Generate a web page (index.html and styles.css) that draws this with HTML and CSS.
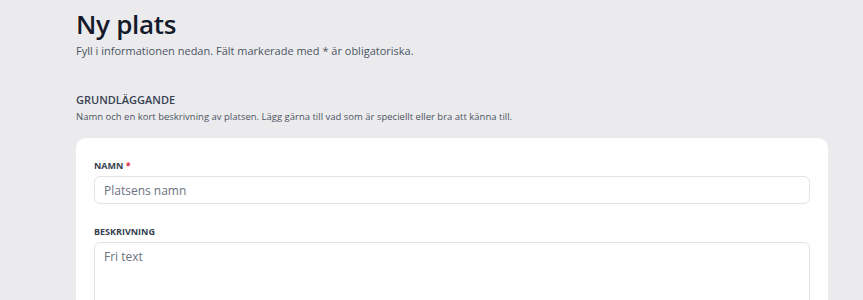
FILE: index.html
```html
<!DOCTYPE html>
<html lang="sv">
<head>
    <meta charset="UTF-8">
    <meta name="viewport" content="width=device-width, initial-scale=1.0">
    <title>Ny plats</title>
    <link rel="stylesheet" href="styles.css">
</head>
<body>
    <div class="page">
        <h1 class="pageTitle">Ny plats</h1>
        <p class="pageIntro">Fyll i informationen nedan. Fält markerade med * är obligatoriska.</p>

        <div class="section">
            <h2 class="sectionTitle">Grundläggande</h2>
            <p class="sectionText">Namn och en kort beskrivning av platsen. Lägg gärna till vad som är speciellt eller bra att känna till.</p>

            <div class="card">
                <div class="field">
                    <label for="name">Namn <span class="required">*</span></label>
                    <input type="text" id="name" placeholder="Platsens namn">
                </div>
                <div class="field">
                    <label for="description">Beskrivning</label>
                    <textarea id="description" placeholder="Fri text" rows="5"></textarea>
                </div>
            </div>
        </div>
    </div>
</body>
</html>
```

FILE: styles.css
```css
body {
    margin: 0;
    background-color: #ebebee;
    font-family: "Open Sans", "Noto Sans", sans-serif;
    color: #1f2937;
}
.page {
    width: 752px;
    margin-left: 76px;
    padding-top: 7px;
}
.pageTitle {
    margin: 0;
    font-size: 26px;
    font-weight: 600;
    line-height: 34px;
    color: #151a2b;
    letter-spacing: -0.3px;
}
.pageIntro {
    margin: 2px 0 0;
    font-size: 11px;
    line-height: 15px;
    color: #4b5563;
}
.section {
    margin-top: 34px;
}
.sectionTitle {
    margin: 0;
    font-size: 11px;
    font-weight: 600;
    line-height: 15px;
    text-transform: uppercase;
    color: #374151;
}
.sectionText {
    margin: 3px 0 0;
    font-size: 9.5px;
    line-height: 14px;
    color: #4b5563;
}
.card {
    margin-top: 14px;
    background-color: #fff;
    border-radius: 10px;
    padding: 22px 18px 20px;
}
.field {
    margin-bottom: 22px;
}
.field label {
    display: block;
    margin-bottom: 4px;
    font-size: 9px;
    font-weight: 700;
    line-height: 12px;
    text-transform: uppercase;
    color: #374151;
}
.required {
    color: #e11d48;
}
.field input,
.field textarea {
    display: block;
    box-sizing: border-box;
    width: 100%;
    border: 1px solid #e2e2e6;
    border-radius: 6px;
    padding: 5px 9px;
    font-family: inherit;
    font-size: 12px;
    color: #1f2937;
    background-color: #fff;
}
.field input {
    height: 28px;
}
.field textarea {
    resize: none;
    line-height: 18px;
}
.field input::placeholder,
.field textarea::placeholder {
    color: #6b7280;
}
```
